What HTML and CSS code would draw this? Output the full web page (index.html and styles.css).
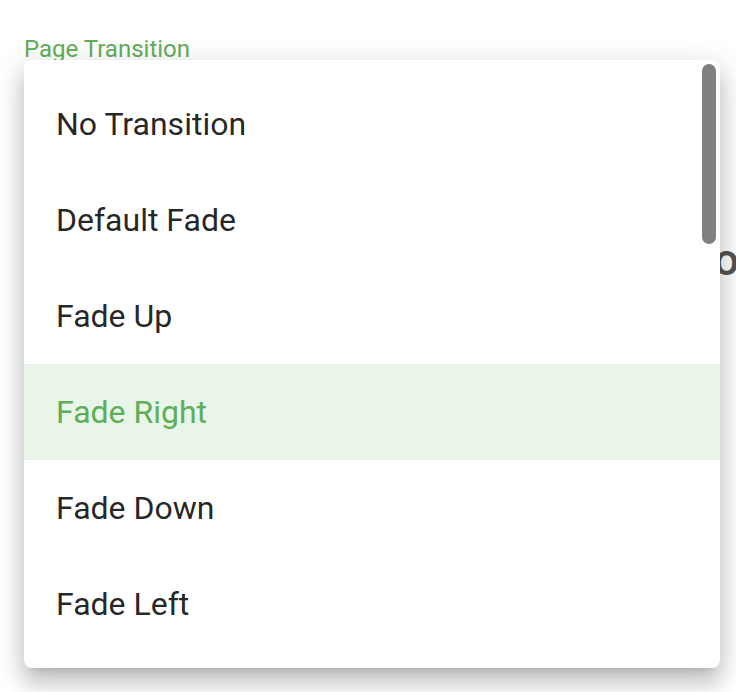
FILE: index.html
```html
<!DOCTYPE html>
<html>
<head>
<meta charset="utf-8">
<link rel="stylesheet" href="styles.css">
</head>
<body>
<div class="page">
  <div class="field-label">Page Transition</div>
  <div class="bg-heading"><span class="bg-letter">o</span><span class="bg-edge"></span></div>
  <div class="menu">
    <div class="list">
      <div class="item">No Transition</div>
      <div class="item">Default Fade</div>
      <div class="item">Fade Up</div>
      <div class="item active">Fade Right</div>
      <div class="item">Fade Down</div>
      <div class="item">Fade Left</div>
    </div>
    <div class="thumb"></div>
  </div>
</div>
</body>
</html>
```
FILE: styles.css
```css
html, body {
  margin: 0;
  padding: 0;
  background: #ffffff;
}
body {
  width: 736px;
  height: 692px;
  overflow: hidden;
  font-family: Roboto, "Liberation Sans", sans-serif;
}
.page {
  position: relative;
  width: 736px;
  height: 692px;
  overflow: hidden;
}
.field-label {
  margin-top: 35px;
  padding-left: 24px;
  font-size: 24px;
  line-height: 28px;
  color: #5fae58;
}
.bg-heading {
  margin-top: 171px;
  padding-left: 714px;
  display: flex;
  align-items: center;
  gap: 3px;
  height: 52px;
}
.bg-letter {
  font-size: 44px;
  line-height: 52px;
  font-weight: 500;
  color: #555555;
}
.bg-edge {
  width: 1px;
  height: 50px;
  background: #d8d8d8;
}
.menu {
  position: absolute;
  left: 24px;
  top: 60px;
  width: 696px;
  height: 608px;
  background: #ffffff;
  border-radius: 8px;
  overflow: hidden;
  box-shadow: 0 10px 10px -10px rgba(0,0,0,.2), 0 16px 20px 2px rgba(0,0,0,.14), 0 6px 28px 4px rgba(0,0,0,.12);
  z-index: 2;
}
.list {
  padding-top: 16px;
  display: flex;
  flex-direction: column;
}
.item {
  height: 96px;
  display: flex;
  align-items: center;
  padding-left: 32px;
  font-size: 32px;
  color: rgba(0,0,0,.87);
}
.item.active {
  background: #e9f5e9;
  color: #5fae58;
}
.thumb {
  position: absolute;
  top: 4px;
  right: 4px;
  width: 14px;
  height: 180px;
  border-radius: 7px;
  background: #808080;
}
```
